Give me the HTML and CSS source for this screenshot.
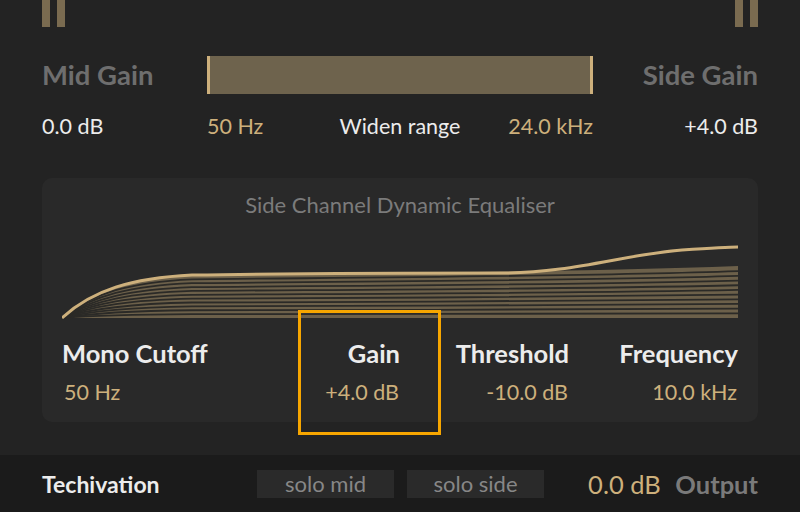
FILE: index.html
```html
<!DOCTYPE html>
<html>
	<head>
		<title>Side Channel Widener</title>
		<link rel="stylesheet" href="styles.css">
	</head>
	<body>
		<div class="meters">
			<div class="pair"><span></span><span></span></div>
			<div class="pair"><span></span><span></span></div>
		</div>

		<div class="widen">
			<div class="big-label">Mid Gain</div>
			<div class="range"></div>
			<div class="big-label right">Side Gain</div>

			<div class="val">0.0 dB</div>
			<div class="range-values">
				<span class="gold">50 Hz</span>
				<span class="val">Widen range</span>
				<span class="gold right">24.0 kHz</span>
			</div>
			<div class="val right">+4.0 dB</div>
		</div>

		<div class="panel">
			<div class="panel-title">Side Channel Dynamic Equaliser</div>

			<svg class="curve" width="676" height="80" viewBox="0 0 676 80">
				<g transform="translate(0,78)">
					<path class="stripe-fill" d="M0,0 C30,-28 70,-40 130,-43 C300,-45 520,-46 676,-52 L676,0 Z"/>
					<path class="stripe-gap" transform="scale(1,0.09)" d="M0,0 C30,-28 70,-40 130,-43 C300,-45 520,-46 676,-52"/>
					<path class="stripe-gap" transform="scale(1,0.18)" d="M0,0 C30,-28 70,-40 130,-43 C300,-45 520,-46 676,-52"/>
					<path class="stripe-gap" transform="scale(1,0.27)" d="M0,0 C30,-28 70,-40 130,-43 C300,-45 520,-46 676,-52"/>
					<path class="stripe-gap" transform="scale(1,0.36)" d="M0,0 C30,-28 70,-40 130,-43 C300,-45 520,-46 676,-52"/>
					<path class="stripe-gap" transform="scale(1,0.45)" d="M0,0 C30,-28 70,-40 130,-43 C300,-45 520,-46 676,-52"/>
					<path class="stripe-gap" transform="scale(1,0.54)" d="M0,0 C30,-28 70,-40 130,-43 C300,-45 520,-46 676,-52"/>
					<path class="stripe-gap" transform="scale(1,0.63)" d="M0,0 C30,-28 70,-40 130,-43 C300,-45 520,-46 676,-52"/>
					<path class="stripe-gap" transform="scale(1,0.72)" d="M0,0 C30,-28 70,-40 130,-43 C300,-45 520,-46 676,-52"/>
					<path class="stripe-gap" transform="scale(1,0.81)" d="M0,0 C30,-28 70,-40 130,-43 C300,-45 520,-46 676,-52"/>
					<path class="stripe-gap" transform="scale(1,0.90)" d="M0,0 C30,-28 70,-40 130,-43 C300,-45 520,-46 676,-52"/>
				</g>
				<path class="eq-line" d="M0,78 C30,50 70,38 130,35 C250,33 360,33 440,33 C510,33 560,15 620,10 C650,8 665,7 676,7"/>
			</svg>

			<div class="knobs">
				<div class="knob left">
					<div class="knob-name">Mono Cutoff</div>
					<div class="gold">50 Hz</div>
				</div>
				<div class="knob">
					<div class="knob-name">Gain</div>
					<div class="gold">+4.0 dB</div>
				</div>
				<div class="knob">
					<div class="knob-name">Threshold</div>
					<div class="gold">-10.0 dB</div>
				</div>
				<div class="knob">
					<div class="knob-name">Frequency</div>
					<div class="gold">10.0 kHz</div>
				</div>
			</div>
		</div>

		<div class="highlight"></div>

		<div class="footer">
			<div class="brand">Techivation</div>
			<div class="solo">solo mid</div>
			<div class="solo">solo side</div>
			<div class="output"><span class="gold">0.0 dB</span> <b>Output</b></div>
		</div>
	</body>
</html>
```

FILE: styles.css
```css
body {
	margin: 0;
	width: 800px;
	height: 512px;
	overflow: hidden;
	position: relative;
	background: #232323;
	color: #e6e6e6;
	font-family: Lato, "Open Sans", sans-serif;
}

.gold {
	color: #cdb07c;
}

.meters {
	display: flex;
	justify-content: space-between;
	height: 27px;
	padding: 0 42px;
}

.pair {
	display: flex;
	gap: 7px;
}

.pair span {
	width: 8px;
	background: #7a6b50;
}

.widen {
	display: grid;
	grid-template-columns: 165px 386px 165px;
	padding: 29px 42px 0;
	align-items: center;
}

.big-label {
	font-size: 27.5px;
	font-weight: bold;
	color: #6e6e6e;
	height: 38px;
	line-height: 38px;
}

.right {
	text-align: right;
}

.range {
	height: 38px;
	box-sizing: border-box;
	background: #6e634d;
	border-left: 3px solid #cdb07c;
	border-right: 3px solid #cdb07c;
}

.val {
	color: #ececec;
}

.widen > .val, .range-values {
	font-size: 21.5px;
	margin-top: 20px;
	height: 24px;
	line-height: 24px;
	white-space: nowrap;
}

.range-values {
	display: grid;
	grid-template-columns: 1fr auto 1fr;
}

.panel {
	margin: 40px 42px 0;
	height: 244px;
	border-radius: 10px;
	background: #292929;
	padding: 0 20px 0 20px;
	box-sizing: border-box;
}

.panel-title {
	text-align: center;
	color: #7b7b7b;
	font-size: 22px;
	padding-top: 14px;
	height: 26px;
	line-height: 26px;
}

.curve {
	display: block;
	margin-top: 22px;
}

.stripe-fill {
	fill: #6c604a;
}

.stripe-gap {
	fill: none;
	stroke: #2b2a27;
	stroke-width: 1.8;
	vector-effect: non-scaling-stroke;
}

.eq-line {
	fill: none;
	stroke: #cdb07c;
	stroke-width: 3;
}

.knobs {
	display: grid;
	grid-template-columns: repeat(4, 1fr);
	margin-top: 18px;
}

.knob {
	text-align: right;
}

.knob.left {
	text-align: left;
}

.knob-name {
	font-size: 25.5px;
	font-weight: bold;
	color: #ececec;
	height: 30px;
	line-height: 30px;
	white-space: nowrap;
}

.knob .gold {
	font-size: 21.5px;
	margin-top: 12px;
	line-height: 24px;
	padding-right: 1px;
}

.knob.left .gold {
	padding-left: 2px;
}

.highlight {
	position: absolute;
	left: 298px;
	top: 310px;
	width: 137px;
	height: 119px;
	border: 3px solid #f7a600;
}

.footer {
	position: absolute;
	left: 0;
	right: 0;
	bottom: 0;
	height: 57px;
	background: #1b1b1b;
	display: flex;
	align-items: center;
	padding: 0 42px;
}

.brand {
	width: 215px;
	font-size: 23px;
	font-weight: bold;
	color: #ececec;
}

.solo {
	width: 137px;
	height: 28px;
	line-height: 28px;
	margin-right: 13px;
	background: #2a2a2a;
	color: #878787;
	text-align: center;
	font-size: 22px;
}

.output {
	margin-left: auto;
	font-size: 25.5px;
}

.output b {
	color: #7a7a7a;
	margin-left: 8px;
}
```
